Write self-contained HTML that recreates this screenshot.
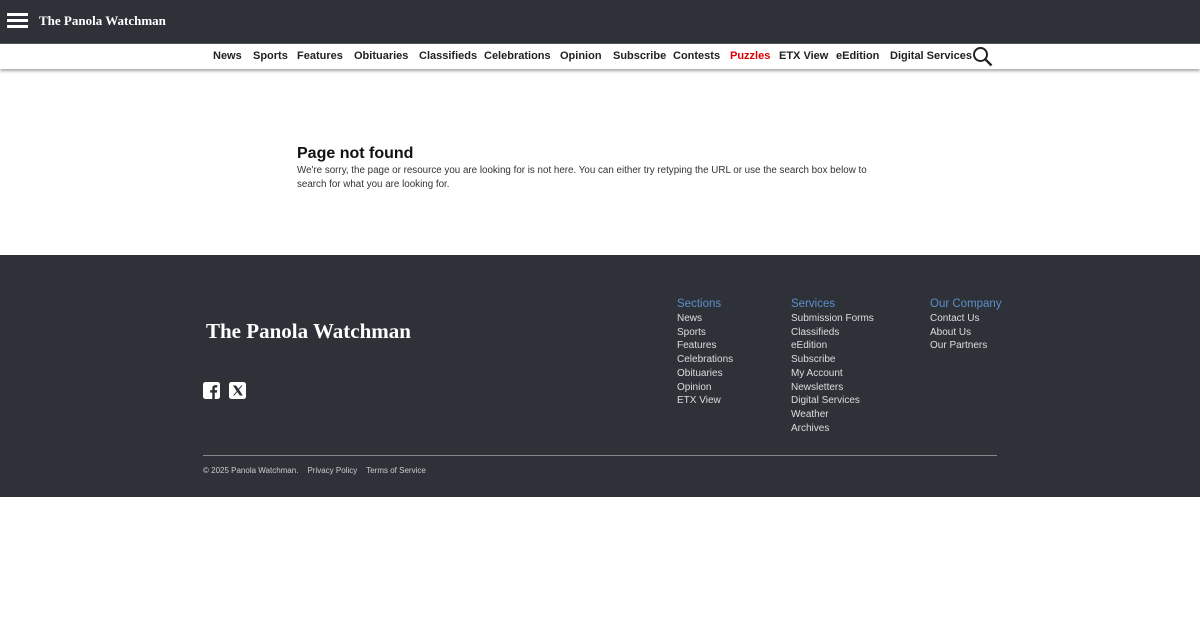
<!DOCTYPE html>
<html><head><meta charset="utf-8"><style>
*{margin:0;padding:0;box-sizing:border-box}
body{width:1200px;height:620px;background:#fff;font-family:"Liberation Sans",sans-serif;position:relative;overflow:hidden}
.top{position:absolute;left:0;top:0;width:1200px;height:43px;background:#2f3139}
.nav{position:absolute;left:0;top:43px;width:1200px;height:26px;background:#fff;box-shadow:0 2px 3px rgba(0,0,0,.35);border-top:1px solid #555}
.nav span{position:absolute;top:6px;font-size:11px;font-weight:bold;color:#222;white-space:nowrap}
.logo{font-family:"Liberation Serif",serif;color:#fff;font-weight:bold;white-space:nowrap}
.foot{position:absolute;left:0;top:255px;width:1200px;height:242px;background:#2f3139}
.col{position:absolute;top:42px;font-size:10px;color:#ddd;line-height:13.7px}
.col b{display:block;font-weight:normal;color:#5b8fc7;font-size:11.5px;line-height:14px;margin-bottom:1px}
</style></head><body>
<div class="top">
 <div style="position:absolute;left:7px;top:13px;width:21px;height:3px;background:#fff"></div>
 <div style="position:absolute;left:7px;top:19px;width:21px;height:3px;background:#fff"></div>
 <div style="position:absolute;left:7px;top:25px;width:21px;height:3px;background:#fff"></div>
 <div class="logo" style="position:absolute;left:39px;top:13px;font-size:13px">The Panola Watchman</div>
</div>
<div class="nav">
 <span style="left:213px">News</span><span style="left:253px">Sports</span><span style="left:297px">Features</span><span style="left:354px">Obituaries</span><span style="left:419px">Classifieds</span><span style="left:484px">Celebrations</span><span style="left:560px">Opinion</span><span style="left:613px">Subscribe</span><span style="left:673px">Contests</span><span style="left:730px;color:#d00">Puzzles</span><span style="left:779px">ETX View</span><span style="left:836px">eEdition</span><span style="left:890px">Digital Services</span>
 <svg style="position:absolute;left:972px;top:2px" width="21" height="21" viewBox="0 0 21 21"><circle cx="8.5" cy="8.5" r="6.5" fill="none" stroke="#222" stroke-width="2"/><line x1="13.3" y1="13.3" x2="19.5" y2="19.5" stroke="#222" stroke-width="2.4"/></svg>
</div>
<div style="position:absolute;left:297px;top:145px;font-size:16px;font-weight:bold;color:#111">Page not found</div>
<div style="position:absolute;left:297px;top:164px;width:600px;font-size:9.8px;line-height:14px;color:#333">We're sorry, the page or resource you are looking for is not here. You can either try retyping the URL or use the search box below to search for what you are looking for.</div>
<div class="foot">
 <div class="logo" style="position:absolute;left:206px;top:64px;font-size:21px">The Panola Watchman</div>
 <svg style="position:absolute;left:203px;top:127px" width="17" height="17" viewBox="0 0 17 17"><rect width="17" height="17" rx="2.5" fill="#fff"/><path d="M11.8 17V10.6h2.1l.3-2.5h-2.4V6.6c0-.7.2-1.2 1.2-1.2h1.3V3.2c-.2 0-1-.1-1.9-.1-1.9 0-3.1 1.1-3.1 3.2v1.8H7.2v2.5h2.1V17z" fill="#2f3139"/></svg>
 <svg style="position:absolute;left:229px;top:127px" width="17" height="17" viewBox="0 0 17 17"><rect width="17" height="17" rx="2.5" fill="#fff"/><path d="M4 3.5h3l2.4 3.3 2.8-3.3h1.3L10 7.6l3.8 5.9h-3L8.3 10l-3 3.5H4l3.7-4.3z" fill="#2f3139"/></svg>
 <div class="col" style="left:677px"><b>Sections</b>News<br>Sports<br>Features<br>Celebrations<br>Obituaries<br>Opinion<br>ETX View</div>
 <div class="col" style="left:791px"><b>Services</b>Submission Forms<br>Classifieds<br>eEdition<br>Subscribe<br>My Account<br>Newsletters<br>Digital Services<br>Weather<br>Archives</div>
 <div class="col" style="left:930px"><b>Our Company</b>Contact Us<br>About Us<br>Our Partners</div>
 <div style="position:absolute;left:203px;top:200px;width:794px;height:1px;background:#888"></div>
 <div style="position:absolute;left:203px;top:211px;font-size:8px;color:#ccc;white-space:nowrap">© 2025 Panola Watchman.<span style="margin-left:9px">Privacy Policy</span><span style="margin-left:9px">Terms of Service</span></div>
</div>
</body></html>
